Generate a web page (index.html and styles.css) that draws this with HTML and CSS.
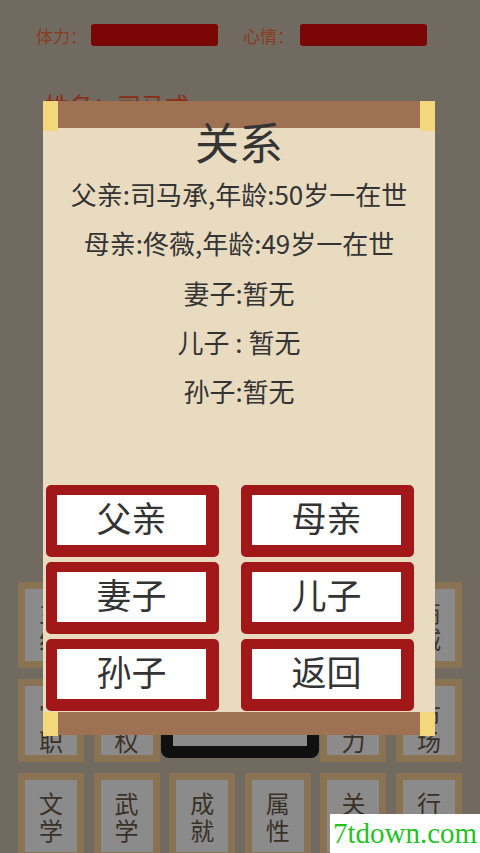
FILE: index.html
```html
<!DOCTYPE html>
<html lang="zh">
<head>
  <meta charset="UTF-8">
  <title>关系</title>
  <link rel="stylesheet" href="styles.css">
</head>
<body>
  <div class="page">
    <div class="stats">
      <span class="stat-label">体力：</span>
      <span class="stat-bar"></span>
      <span class="stat-label second">心情：</span>
      <span class="stat-bar"></span>
    </div>
    <div class="name">姓名：司马式</div>

    <!-- Menu tiles behind the dialog -->
    <div class="tiles">
      <div class="tile"><span>主</span><span>线</span></div>
      <div class="tile"><span>家</span><span>族</span></div>
      <div class="tile"><span>府</span><span>邸</span></div>
      <div class="tile"><span>物</span><span>品</span></div>
      <div class="tile"><span>任</span><span>务</span></div>
      <div class="tile"><span>商</span><span>城</span></div>

      <div class="tile low"><span>官</span><span>职</span></div>
      <div class="tile low"><span>兵</span><span>权</span></div>
      <div class="screen"></div>
      <div class="tile low"><span>势</span><span>力</span></div>
      <div class="tile low"><span>市</span><span>场</span></div>

      <div class="tile"><span>文</span><span>学</span></div>
      <div class="tile"><span>武</span><span>学</span></div>
      <div class="tile"><span>成</span><span>就</span></div>
      <div class="tile"><span>属</span><span>性</span></div>
      <div class="tile"><span>关</span><span>系</span></div>
      <div class="tile"><span>行</span><span>动</span></div>
    </div>

    <!-- Relation dialog (scroll) -->
    <div class="scroll">
      <div class="rod top">
        <span class="cap"></span>
        <span class="bar"></span>
        <span class="cap"></span>
      </div>
      <div class="scroll-body">
        <h1 class="title">关系</h1>
        <div class="info">
          <p>父亲:司马承,年龄:50岁一在世</p>
          <p>母亲:佟薇,年龄:49岁一在世</p>
          <p>妻子:暂无</p>
          <p>儿子 : 暂无</p>
          <p>孙子:暂无</p>
        </div>
        <div class="actions">
          <button class="rel-btn">父亲</button>
          <button class="rel-btn">母亲</button>
          <button class="rel-btn">妻子</button>
          <button class="rel-btn">儿子</button>
          <button class="rel-btn">孙子</button>
          <button class="rel-btn">返回</button>
        </div>
      </div>
      <div class="rod bottom">
        <span class="cap"></span>
        <span class="bar"></span>
        <span class="cap"></span>
      </div>
    </div>

    <div class="watermark">7tdown.com</div>
  </div>
</body>
</html>
```

FILE: styles.css
```css
body {
  margin: 0;
  background-color: #716a60;
  font-family: "Noto Sans CJK SC", "Noto Sans", sans-serif;
}
.page {
  position: relative;
  width: 480px;
  height: 853px;
  overflow: hidden;
}
.stats {
  display: flex;
  align-items: center;
  height: 22px;
  padding: 24px 0 0 36px;
}
.stat-label {
  width: 55px;
  font-size: 17px;
  color: #8a3c20;
}
.stat-label.second {
  margin-left: 25px;
  width: 57px;
}
.stat-bar {
  width: 127px;
  height: 22px;
  border-radius: 3px;
  background-color: #7a0606;
}
.name {
  margin: 45px 0 0 45px;
  font-size: 24px;
  line-height: 28px;
  color: #8a2c16;
}
.tiles {
  display: grid;
  grid-template-columns: repeat(6, 66px);
  grid-template-rows: 86px 83px 86px;
  justify-content: space-between;
  row-gap: 11px;
  margin-top: 463px;
  padding: 0 18px;
}
.tile {
  display: flex;
  flex-direction: column;
  align-items: center;
  justify-content: center;
  border: 7px solid #8a7353;
  background-color: #8b8b8b;
  font-size: 24px;
  line-height: 27px;
  color: #3a3127;
}
.tile.low {
  padding-top: 12px;
}
.screen {
  grid-column: span 2;
  margin: 0 -8px 4px -8px;
  border: 12px solid #101011;
  border-top-width: 14px;
  border-radius: 8px;
  background-color: #8b8b8b;
}

/* scroll dialog */
.scroll {
  position: absolute;
  left: 43px;
  top: 101px;
  width: 392px;
  height: 635px;
  display: flex;
  flex-direction: column;
}
.rod {
  display: flex;
  align-items: flex-start;
}
.rod .cap {
  width: 15px;
  background-color: #f4d77c;
}
.rod .bar {
  flex: 1;
  background-color: #9d7151;
}
.rod.top {
  margin-bottom: -3px;
  position: relative;
}
.rod.top .cap {
  height: 30px;
}
.rod.top .bar {
  height: 27px;
}
.rod.bottom .cap {
  height: 24px;
}
.rod.bottom .bar {
  height: 23px;
}
.scroll-body {
  flex: 1;
  background-color: #e8dbc0;
  text-align: center;
  color: #343434;
}
.title {
  margin: -5px 0 0;
  font-size: 44px;
  font-weight: normal;
  line-height: 36px;
  position: relative;
}
.info {
  margin-top: 10px;
}
.info p {
  margin: 0;
  font-size: 26px;
  line-height: 49.3px;
}
.actions {
  display: grid;
  grid-template-columns: 173px 173px;
  grid-auto-rows: 72px;
  column-gap: 22px;
  row-gap: 5px;
  margin: 70px 0 0 3px;
}
.rel-btn {
  border-style: solid;
  border-color: #a21717;
  border-width: 10px 13px 12px 11px;
  border-radius: 5px;
  background-color: #fff;
  padding: 0 0 6px;
  font-family: "Noto Sans CJK SC", sans-serif;
  font-size: 35px;
  line-height: 38px;
  color: #333;
}
.watermark {
  position: absolute;
  right: 0;
  bottom: 0;
  width: 150px;
  height: 39px;
  background-color: #fff;
  font-family: "Liberation Serif", serif;
  font-size: 29px;
  line-height: 39px;
  color: #1fc41f;
  text-indent: 3px;
}
```
